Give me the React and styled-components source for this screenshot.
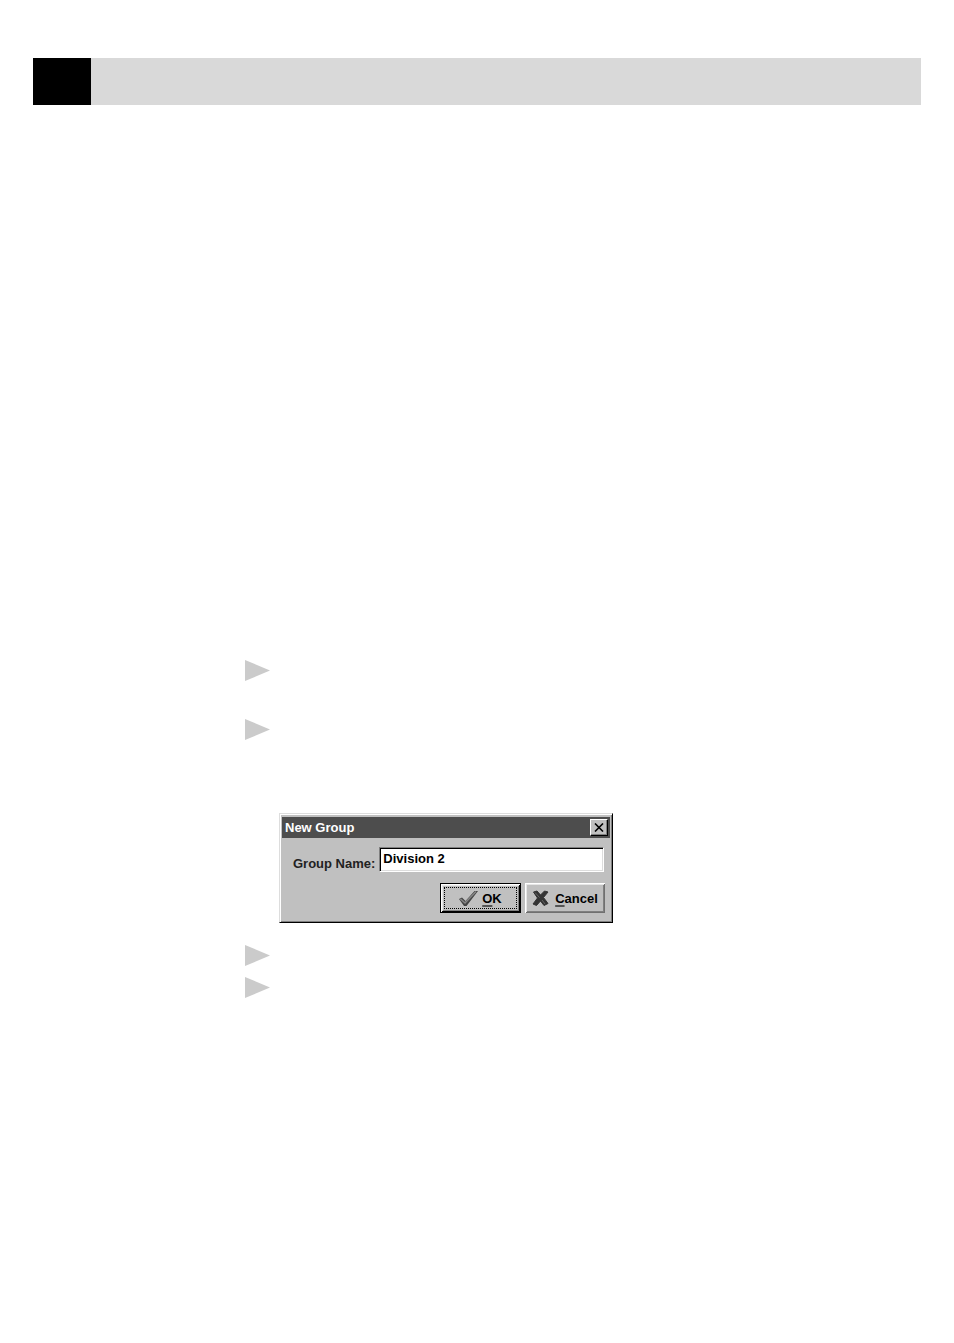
import { styled, createGlobalStyle } from 'styled-components';

const GlobalStyle = createGlobalStyle`
    body {
        margin: 0;
        background-color: white;
    }
    * {
        box-sizing: border-box;
    }
`

const Page = styled.div`
    min-height: 100vh;
    padding: 58px 33px;
    font-family: "Liberation Sans", Arial, sans-serif;
`
const Header = styled.header`
    display: flex;
    height: 47px;
    background-color: #d9d9d9;
`
const PageTab = styled.div`
    width: 58px;
    background-color: black;
`
const Content = styled.main`
    padding: 555px 0 0 212px;
`
const Steps = styled.ul`
    display: flex;
    flex-direction: column;
    gap: ${(props) => props.$gap};
    margin: 0;
    padding: 0;
    list-style: none;
`
const Step = styled.li`
    height: 21px;
`
const Marker = styled.svg`
    display: block;
    width: 25px;
    height: 21px;
    fill: #cbcbcb;
`
const Dialog = styled.form`
    width: 334px;
    max-width: 100%;
    margin: 73px 0 22px 34px;
    padding: 3px 2px 9px;
    background-color: #c0c0c0;
    border: 1px solid;
    border-color: #dddddd black black #dddddd;
    box-shadow: inset 1px 1px white, inset -1px -1px #808080;
    font-size: 13px;
    font-weight: bold;
    line-height: 15px;
`
const TitleBar = styled.div`
    display: flex;
    align-items: center;
    justify-content: space-between;
    height: 21px;
    padding: 0 2px 0 3px;
    background-color: #4d4d4d;
    color: white;
`
const Title = styled.h1`
    margin: 0;
    font-size: 13px;
`
const CloseButton = styled.button`
    display: flex;
    align-items: center;
    justify-content: center;
    width: 18px;
    height: 17px;
    padding: 0;
    background-color: #c0c0c0;
    border: 1px solid;
    border-color: white black black white;
    box-shadow: inset -1px -1px #808080;
`
const Field = styled.div`
    display: flex;
    align-items: center;
    gap: 4px;
    padding: 9px 6px 0 11px;
`
const Label = styled.label`
    padding-top: 8px;
    color: #222222;
`
const Input = styled.input`
    flex: 1;
    min-width: 0;
    height: 25px;
    padding: 0 3px 3px;
    background-color: white;
    border: 1px solid;
    border-color: #808080 white white #808080;
    box-shadow: inset 1px 1px black, inset -1px -1px #dddddd;
    color: black;
    font: inherit;
    outline: none;
`
const Actions = styled.div`
    display: flex;
    justify-content: flex-end;
    gap: 4px;
    padding: 11px 5px 0 0;
`
const Button = styled.button`
    display: flex;
    align-items: center;
    justify-content: center;
    gap: 6px;
    width: ${(props) => (props.$default ? '81px' : '80px')};
    height: 30px;
    padding: 0;
    background-color: #c0c0c0;
    border: ${(props) => (props.$default ? '1px solid black' : 'none')};
    box-shadow: inset 1px 1px white, inset -1px -1px ${(props) => (props.$default ? 'black' : '#707070')},
        inset 2px 2px #e6e6e6, inset -2px -2px #808080;
    color: black;
    font: inherit;
`
const FocusRing = styled.span`
    display: flex;
    align-items: center;
    justify-content: center;
    gap: 4px;
    width: 73px;
    height: 22px;
    border: 1px dotted black;
`
const Key = styled.span`
    text-decoration: underline #555555;
    text-decoration-thickness: 2px;
    text-underline-offset: 2px;
`

const StepMarker = () => {
    return(
        <Step>
            <Marker viewBox="0 0 25 21" aria-hidden="true">
                <path d="M0 0L25 10.5L0 21Z"/>
            </Marker>
        </Step>
    )
}

const CloseIcon = () => (
    <svg width="10" height="9" viewBox="0 0 10 9" aria-hidden="true">
        <path d="M1 0.5L9 8.5M9 0.5L1 8.5" stroke="black" strokeWidth="1.6"/>
    </svg>
)

const CheckIcon = () => (
    <svg width="19" height="17" viewBox="0 0 19 17" aria-hidden="true">
        <path d="M0 9L3 7.5L6.5 11L15.5 1H19L7.5 16H5Z" fill="#444444"/>
        <path d="M1.5 9L6 13L17 1.5" fill="none" stroke="#858585" strokeWidth="1.6"/>
    </svg>
)

const CrossIcon = () => (
    <svg width="17" height="16" viewBox="0 0 17 16" aria-hidden="true">
        <path d="M1.5 2L5 1L8.5 5L12.5 1L16 2L11.5 7.5L16 13.5L12 15.5L8.5 11L4.5 15.5L1 14L5.5 8Z" fill="#333333" stroke="#333333" strokeLinejoin="round"/>
        <path d="M3 2.5L7.5 7.5M10 10L13 14" stroke="#666666" strokeWidth="1"/>
    </svg>
)

const App = () => {
    return(
        <>
            <GlobalStyle/>
            <Page>
                <Header>
                    <PageTab/>
                </Header>
                <Content>
                    <Steps $gap="38px">
                        <StepMarker/>
                        <StepMarker/>
                    </Steps>
                    <Dialog role="dialog" aria-labelledby="dialog-title" onSubmit={(e) => e.preventDefault()}>
                        <TitleBar>
                            <Title id="dialog-title">New Group</Title>
                            <CloseButton type="button" aria-label="Close">
                                <CloseIcon/>
                            </CloseButton>
                        </TitleBar>
                        <Field>
                            <Label htmlFor="group-name">Group Name:</Label>
                            <Input id="group-name" type="text" defaultValue="Division 2"/>
                        </Field>
                        <Actions>
                            <Button type="submit" $default>
                                <FocusRing>
                                    <CheckIcon/>
                                    <span><Key>O</Key>K</span>
                                </FocusRing>
                            </Button>
                            <Button type="button">
                                <CrossIcon/>
                                <span><Key>C</Key>ancel</span>
                            </Button>
                        </Actions>
                    </Dialog>
                    <Steps $gap="11px">
                        <StepMarker/>
                        <StepMarker/>
                    </Steps>
                </Content>
            </Page>
        </>
    )
}

export default App
